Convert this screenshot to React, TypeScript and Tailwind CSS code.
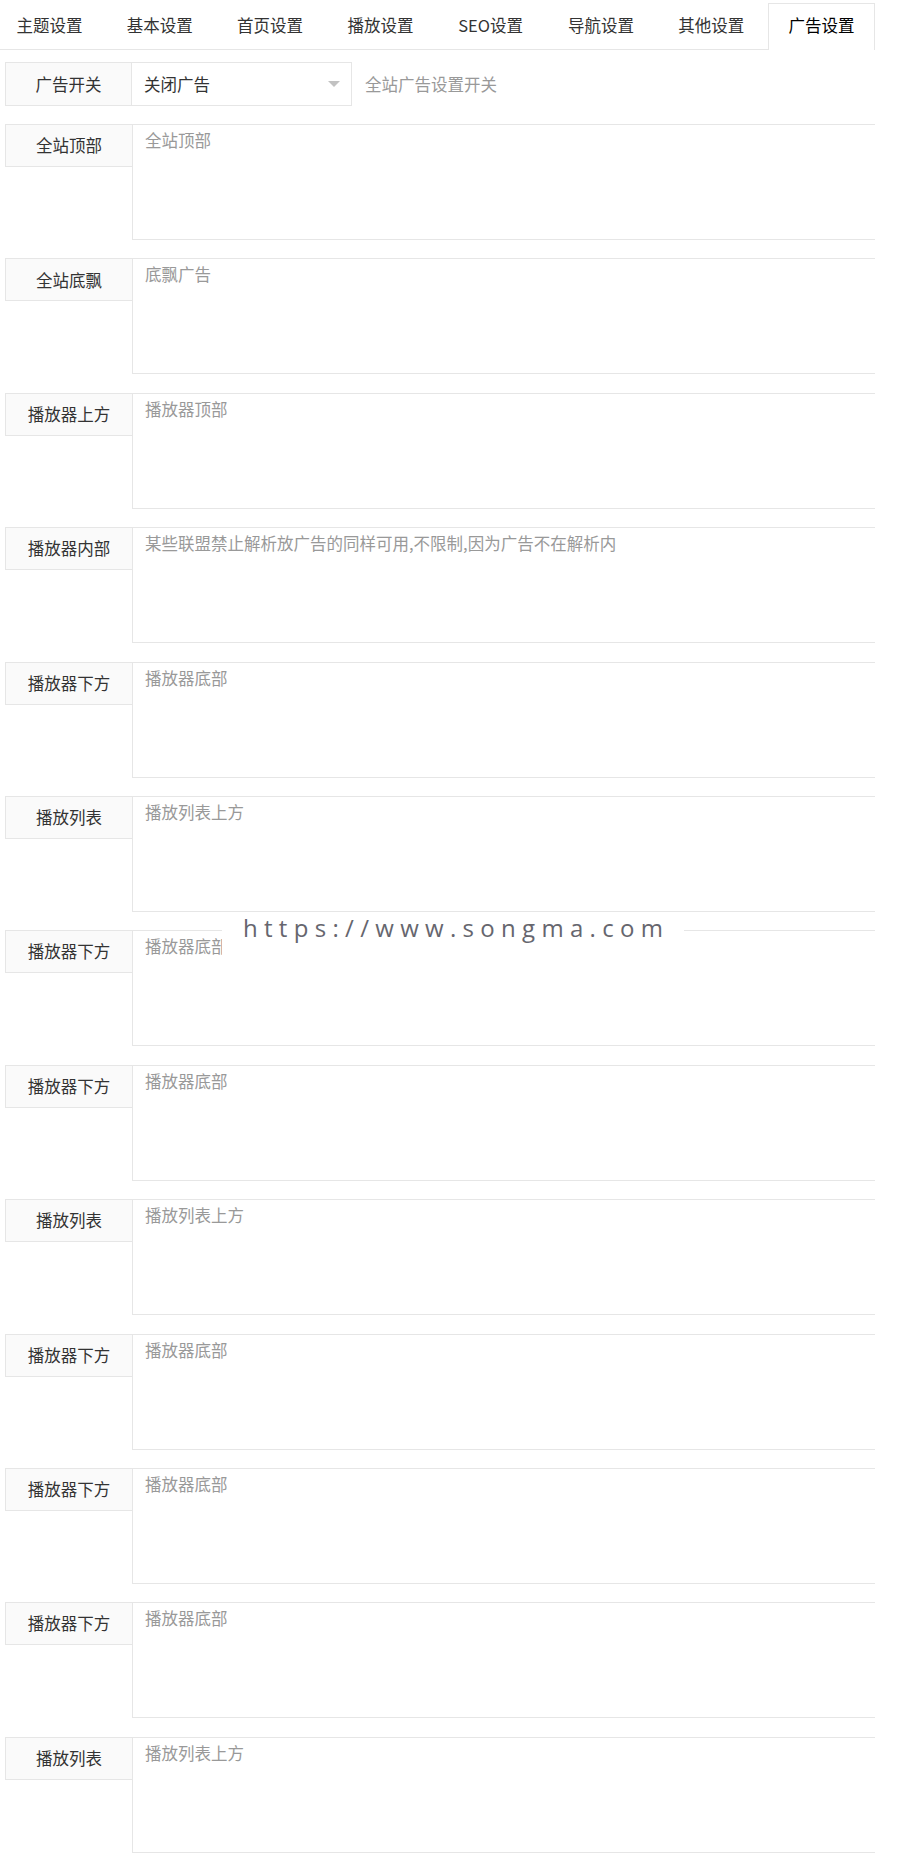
import React from "react";

const tabs = ["主题设置", "基本设置", "首页设置", "播放设置", "SEO设置", "导航设置", "其他设置", "广告设置"];

const rows: [string, string][] = [
  ["全站顶部", "全站顶部"],
  ["全站底飘", "底飘广告"],
  ["播放器上方", "播放器顶部"],
  ["播放器内部", "某些联盟禁止解析放广告的同样可用,不限制,因为广告不在解析内"],
  ["播放器下方", "播放器底部"],
  ["播放列表", "播放列表上方"],
  ["播放器下方", "播放器底部"],
  ["播放器下方", "播放器底部"],
  ["播放列表", "播放列表上方"],
  ["播放器下方", "播放器底部"],
  ["播放器下方", "播放器底部"],
  ["播放器下方", "播放器底部"],
  ["播放列表", "播放列表上方"],
];

export default function App() {
  return (
    <div
      className="relative w-[875px] overflow-hidden bg-white text-[16.5px] font-normal text-[#333] min-h-[1856px]"
      style={{ fontFamily: '"Microsoft YaHei", "Noto Sans CJK SC", "Noto Sans", sans-serif' }}
    >
      {/* Tabs */}
      <div className="flex h-[50px] items-end border-b border-[#e6e6e6] ml-[-4px] gap-[3.3px]">
        {tabs.map((t, i) => {
          const active = i === tabs.length - 1;
          return (
            <div
              key={t}
              className={
                active
                  ? "w-[107px] h-[47px] mb-[-1px] shrink-0 border border-b-0 border-[#e6e6e6] bg-white text-center leading-[42px] text-[#000]"
                  : "w-[107px] h-[47px] mb-[-1px] shrink-0 border border-b-0 border-transparent text-center leading-[42px] text-[#333]"
              }
            >
              {t}
            </div>
          );
        })}
      </div>

      {/* Switch row */}
      <div className="mt-[12px] ml-[5px] flex items-start">
        <div className="w-[127px] h-[44px] shrink-0 border border-[#e6e6e6] bg-[#fafafa] flex items-center justify-center">
          广告开关
        </div>
        <div className="relative w-[220px] h-[44px] shrink-0 border border-l-0 border-[#e6e6e6] bg-white pl-[12px] leading-[42px] text-[#333]">
          关闭广告
          <span className="absolute right-[11px] top-[18px] w-0 h-0 border-x-[6px] border-x-transparent border-t-[6px] border-t-[#c2c2c2]" />
        </div>
        <div className="ml-[13px] leading-[44px] text-[#999]">全站广告设置开关</div>
      </div>

      {/* Textarea rows */}
      <div className="mt-[18px] flex flex-col gap-[18.4px]">
        {rows.map(([label, ph], i) => (
          <div key={i} className="ml-[5px] flex items-start">
            <div className="w-[127px] h-[43px] shrink-0 border border-r-0 border-[#e6e6e6] bg-[#fafafa] flex items-center justify-center">
              {label}
            </div>
            <textarea
              readOnly
              placeholder={ph}
              className="w-[800px] h-[116px] shrink-0 border border-[#e6e6e6] bg-white px-[12px] pt-[4px] pb-[7px] leading-[23.6px] text-[16.5px] font-normal resize-none outline-none placeholder:text-[#999]"
              style={{ fontFamily: '"Noto Sans CJK SC", "Noto Sans", sans-serif' }}
            />
          </div>
        ))}
      </div>

      {/* Watermark overlay */}
      <div
        className="absolute top-[914px] left-[222px] w-[462px] h-[55px] bg-white pl-[21px] text-[24px] font-normal leading-[28px] tracking-[6.3px] text-[#66666e] whitespace-nowrap"
        style={{ fontFamily: '"Open Sans", sans-serif' }}
      >
        https://www.songma.com
      </div>
    </div>
  );
}
